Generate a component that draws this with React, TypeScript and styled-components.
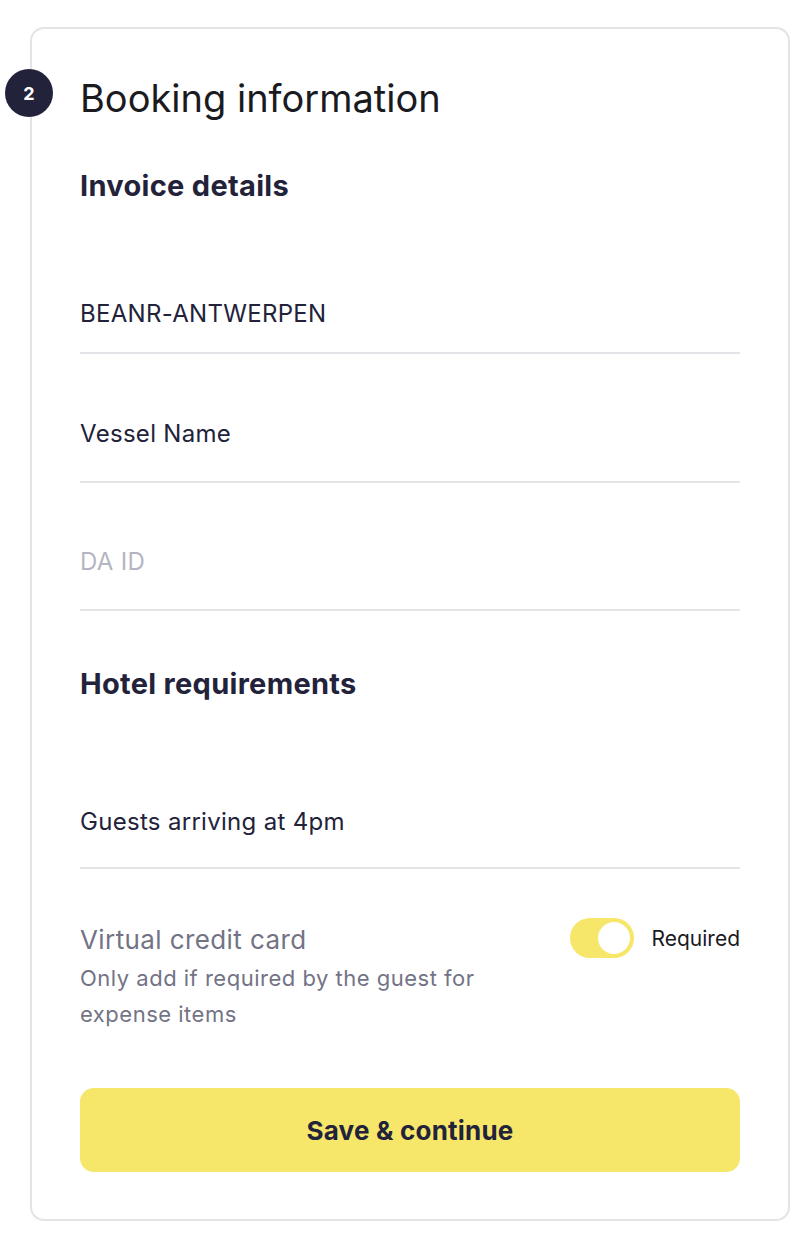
import { FC } from 'react'
import styled, { createGlobalStyle } from 'styled-components'

const GlobalStyle = createGlobalStyle`
  body {
    margin: 0;
    background: #ffffff;
    font-family: Inter, 'Noto Sans', sans-serif;
    -webkit-font-smoothing: antialiased;
  }
  * {
    box-sizing: border-box;
  }
`

interface FieldProps {
  value: string
  placeholder?: boolean
  top: number
  bottom: number
}

const Field: FC<FieldProps> = ({ value, placeholder, top, bottom }) => (
  <FieldRow $top={top} $bottom={bottom}>
    <FieldText $placeholder={placeholder}>{value}</FieldText>
  </FieldRow>
)

const App: FC = () => {
  return (
    <>
      <GlobalStyle />
      <Page>
        <Card>
          <StepBadge>2</StepBadge>
          <Title>Booking information</Title>

          <SectionTitle $top={46}>Invoice details</SectionTitle>
          <Field value="BEANR-ANTWERPEN" top={94} bottom={22} />
          <Field value="Vessel Name" top={64} bottom={31} />
          <Field value="DA ID" placeholder top={63} bottom={31} />

          <SectionTitle $top={55}>Hotel requirements</SectionTitle>
          <Field value="Guests arriving at 4pm" top={104} bottom={29} />

          <CardRow>
            <CardInfo>
              <CardLabel>Virtual credit card</CardLabel>
              <CardHint>
                Only add if required by the guest for
                <br />
                expense items
              </CardHint>
            </CardInfo>
            <ToggleWrap>
              <Toggle role="switch" aria-checked="true">
                <Knob />
              </Toggle>
              <ToggleLabel>Required</ToggleLabel>
            </ToggleWrap>
          </CardRow>

          <SaveButton type="button">Save &amp; continue</SaveButton>
        </Card>
      </Page>
    </>
  )
}

const Page = styled('div')`
  padding: 27px 10px 19px 30px;
`

const Card = styled('div')`
  position: relative;
  display: flex;
  flex-direction: column;
  width: 760px;
  padding: 45px 48px 47px;
  border: 2px solid #e3e3e8;
  border-radius: 14px;
  background: #fff;
`

const StepBadge = styled('div')`
  position: absolute;
  left: -27px;
  top: 40px;
  width: 48px;
  height: 48px;
  border-radius: 50%;
  background: #22223a;
  color: #fff;
  font-size: 18px;
  font-weight: 700;
  display: flex;
  align-items: center;
  justify-content: center;
`

const Title = styled('h1')`
  margin: 0;
  font-size: 38px;
  line-height: 48px;
  font-weight: 400;
  color: #1a1a1f;
`

const SectionTitle = styled('h2')<{ $top: number }>`
  margin: ${(p) => p.$top}px 0 0;
  font-size: 29px;
  line-height: 36px;
  font-weight: 700;
  color: #22223a;
  letter-spacing: 0.3px;
`

const FieldRow = styled('div')<{ $top: number; $bottom: number }>`
  padding: ${(p) => p.$top}px 0 ${(p) => p.$bottom}px;
  border-bottom: 2px solid #e3e3e8;
`

const FieldText = styled('div')<{ $placeholder?: boolean }>`
  font-size: 24px;
  line-height: 32px;
  letter-spacing: 0.3px;
  color: ${(p) => (p.$placeholder ? '#b5b5c2' : '#22223a')};
`

const CardRow = styled('div')`
  display: flex;
  justify-content: space-between;
  align-items: flex-start;
  margin-top: 49px;
`

const CardInfo = styled('div')`
  display: flex;
  flex-direction: column;
  gap: 4px;
  padding-top: 6px;
`

const CardLabel = styled('div')`
  font-size: 26px;
  line-height: 32px;
  letter-spacing: 0.4px;
  color: #737386;
`

const CardHint = styled('div')`
  font-size: 22px;
  line-height: 36px;
  letter-spacing: 0.5px;
  color: #737386;
`

const ToggleWrap = styled('div')`
  display: flex;
  align-items: center;
  gap: 18px;
`

const Toggle = styled('div')`
  display: flex;
  justify-content: flex-end;
  align-items: center;
  width: 64px;
  height: 40px;
  padding: 4px;
  border-radius: 20px;
  background: #f6e66a;
`

const Knob = styled('span')`
  width: 32px;
  height: 32px;
  border-radius: 50%;
  background: #fff;
`

const ToggleLabel = styled('span')`
  font-size: 21px;
  color: #1a1a1f;
`

const SaveButton = styled('button')`
  margin-top: 56px;
  height: 84px;
  border: none;
  border-radius: 14px;
  background: #f6e66a;
  font-family: inherit;
  font-size: 26px;
  font-weight: 700;
  letter-spacing: 0.2px;
  color: #22223a;
  cursor: pointer;
`

export default App
